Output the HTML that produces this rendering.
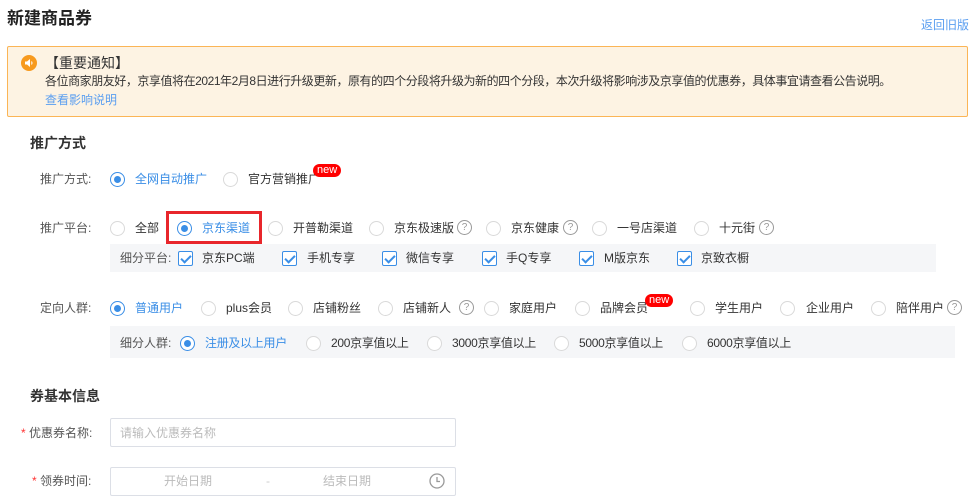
<!DOCTYPE html>
<html><head><meta charset="utf-8"><style>
*{margin:0;padding:0;box-sizing:border-box}
body{width:974px;height:498px;background:#fff;position:relative;overflow:hidden;font-family:"Liberation Sans","Noto Sans CJK SC",sans-serif;font-size:12px;color:#333}
.a{position:absolute;white-space:nowrap;line-height:16px}
.r{position:absolute;width:15px;height:15px;border:1px solid #d9d9d9;border-radius:50%;background:#fff}
.r.on{border-color:#3a8ee6}
.r.on:after{content:"";position:absolute;left:3px;top:3px;width:7px;height:7px;border-radius:50%;background:#3a8ee6}
.c{position:absolute;width:15px;height:15px;border:1px solid #3a8ee6;border-radius:2px;background:#fff}
.c:after{content:"";position:absolute;left:4px;top:1px;width:4px;height:8px;border:solid #3a8ee6;border-width:0 2px 2px 0;transform:rotate(45deg)}
.q{position:absolute;width:15px;height:15px;border:1px solid #999;border-radius:50%;color:#999;font-size:10px;line-height:13px;text-align:center}
.blue{color:#3a8ee6}
.new{position:absolute;background:#f00;color:#fff;font-size:11px;line-height:13px;height:13px;padding:0 4px;border-radius:7px}
.lbl{color:#555}
.box{position:absolute;background:#f5f6f8}
.s{letter-spacing:-0.3px}
</style></head><body>
<div class="a" style="left:7px;top:8px;font-size:17px;font-weight:bold;line-height:22px;color:#222">新建商品券</div>
<div class="a blue" style="left:921px;top:17px;font-size:12px;color:#5a9ef0">返回旧版</div>

<div style="position:absolute;left:7px;top:46px;width:961px;height:71px;border:1px solid #fbb556;background:#fdf3e3;border-radius:2px"></div>
<div style="position:absolute;left:21px;top:55px;width:16px;height:16px;border-radius:50%;background:#f79a1e"></div>
<svg style="position:absolute;left:21px;top:55px" width="16" height="16" viewBox="0 0 16 16"><path d="M4 6.5h2l3-2.5v8l-3-2.5H4z" fill="#fff"/><path d="M10.5 6.5q1 1.5 0 3" stroke="#fff" stroke-width="1" fill="none"/></svg>
<div class="a" style="left:45px;top:54px;font-size:14px;line-height:18px;color:#333">【重要通知】</div>
<div class="a" style="left:45px;top:73px;font-size:12px;letter-spacing:-0.45px">各位商家朋友好，京享值将在2021年2月8日进行升级更新，原有的四个分段将升级为新的四个分段，本次升级将影响涉及京享值的优惠券，具体事宜请查看公告说明。</div>
<div class="a blue" style="left:45px;top:92px;font-size:12px;color:#5a9ef0">查看影响说明</div>

<div class="a" style="left:30px;top:134px;font-size:14px;font-weight:bold;line-height:18px;color:#333">推广方式</div>

<div class="a lbl" style="left:40px;top:171px">推广方式:</div>
<div class="r on" style="left:110px;top:172px"></div><div class="a blue" style="left:135px;top:171px">全网自动推广</div>
<div class="r" style="left:223px;top:172px"></div><div class="a" style="left:248px;top:171px">官方营销推广</div>
<div class="new" style="left:313px;top:164px">new</div>

<div class="a lbl" style="left:40px;top:220px">推广平台:</div>
<div class="r" style="left:110px;top:221px"></div><div class="a" style="left:135px;top:220px">全部</div>
<div style="position:absolute;left:166px;top:211px;width:96px;height:33px;border:3px solid #e8262b"></div>
<div class="r on" style="left:177px;top:221px"></div><div class="a blue" style="left:202px;top:220px">京东渠道</div>
<div class="r" style="left:268px;top:221px"></div><div class="a" style="left:293px;top:220px">开普勒渠道</div>
<div class="r" style="left:369px;top:221px"></div><div class="a" style="left:394px;top:220px">京东极速版</div><div class="q" style="left:457px;top:220px">?</div>
<div class="r" style="left:486px;top:221px"></div><div class="a" style="left:511px;top:220px">京东健康</div><div class="q" style="left:563px;top:220px">?</div>
<div class="r" style="left:592px;top:221px"></div><div class="a" style="left:617px;top:220px">一号店渠道</div>
<div class="r" style="left:694px;top:221px"></div><div class="a" style="left:719px;top:220px">十元街</div><div class="q" style="left:759px;top:220px">?</div>

<div class="box" style="left:110px;top:244px;width:826px;height:28px"></div>
<div class="a lbl" style="left:120px;top:250px">细分平台:</div>
<div class="c" style="left:178px;top:251px"></div><div class="a" style="left:202px;top:250px">京东PC端</div>
<div class="c" style="left:282px;top:251px"></div><div class="a" style="left:307px;top:250px">手机专享</div>
<div class="c" style="left:382px;top:251px"></div><div class="a" style="left:406px;top:250px">微信专享</div>
<div class="c" style="left:482px;top:251px"></div><div class="a" style="left:506px;top:250px">手Q专享</div>
<div class="c" style="left:579px;top:251px"></div><div class="a" style="left:604px;top:250px">M版京东</div>
<div class="c" style="left:677px;top:251px"></div><div class="a" style="left:701px;top:250px">京致衣橱</div>

<div class="a lbl" style="left:40px;top:300px">定向人群:</div>
<div class="r on" style="left:110px;top:301px"></div><div class="a blue" style="left:135px;top:300px">普通用户</div>
<div class="r" style="left:201px;top:301px"></div><div class="a" style="left:226px;top:300px">plus会员</div>
<div class="r" style="left:288px;top:301px"></div><div class="a" style="left:313px;top:300px">店铺粉丝</div>
<div class="r" style="left:378px;top:301px"></div><div class="a" style="left:403px;top:300px">店铺新人</div><div class="q" style="left:459px;top:300px">?</div>
<div class="r" style="left:484px;top:301px"></div><div class="a" style="left:509px;top:300px">家庭用户</div>
<div class="r" style="left:575px;top:301px"></div><div class="a" style="left:600px;top:300px">品牌会员</div>
<div class="new" style="left:645px;top:294px">new</div>
<div class="r" style="left:690px;top:301px"></div><div class="a" style="left:715px;top:300px">学生用户</div>
<div class="r" style="left:780px;top:301px"></div><div class="a" style="left:806px;top:300px">企业用户</div>
<div class="r" style="left:871px;top:301px"></div><div class="a" style="left:896px;top:300px">陪伴用户</div><div class="q" style="left:947px;top:300px">?</div>

<div class="box" style="left:110px;top:326px;width:845px;height:32px"></div>
<div class="a lbl" style="left:120px;top:335px">细分人群:</div>
<div class="r on" style="left:180px;top:336px"></div><div class="a blue s" style="left:205px;top:335px">注册及以上用户</div>
<div class="r" style="left:306px;top:336px"></div><div class="a s" style="left:331px;top:335px">200京享值以上</div>
<div class="r" style="left:427px;top:336px"></div><div class="a s" style="left:452px;top:335px">3000京享值以上</div>
<div class="r" style="left:554px;top:336px"></div><div class="a s" style="left:579px;top:335px">5000京享值以上</div>
<div class="r" style="left:682px;top:336px"></div><div class="a s" style="left:707px;top:335px">6000京享值以上</div>

<div class="a" style="left:30px;top:387px;font-size:14px;font-weight:bold;line-height:18px;color:#333">券基本信息</div>

<div class="a lbl" style="left:21px;top:425px"><span style="color:#f33">*</span> 优惠券名称:</div>
<div style="position:absolute;left:110px;top:418px;width:346px;height:29px;border:1px solid #dcdfe6;border-radius:2px"></div>
<div class="a" style="left:120px;top:425px;color:#bbb">请输入优惠券名称</div>

<div class="a lbl" style="left:32px;top:473px"><span style="color:#f33">*</span> 领券时间:</div>
<div style="position:absolute;left:110px;top:467px;width:346px;height:29px;border:1px solid #dcdfe6;border-radius:2px"></div>
<div class="a" style="left:164px;top:473px;color:#bbb">开始日期</div>
<div class="a" style="left:266px;top:473px;color:#ccc">-</div>
<div class="a" style="left:323px;top:473px;color:#bbb">结束日期</div>
<svg style="position:absolute;left:429px;top:473px" width="16" height="16" viewBox="0 0 16 16"><circle cx="8" cy="8" r="7" fill="none" stroke="#999" stroke-width="1.3"/><path d="M8 4v4.5h3" fill="none" stroke="#999" stroke-width="1.3"/></svg>
</body></html>
